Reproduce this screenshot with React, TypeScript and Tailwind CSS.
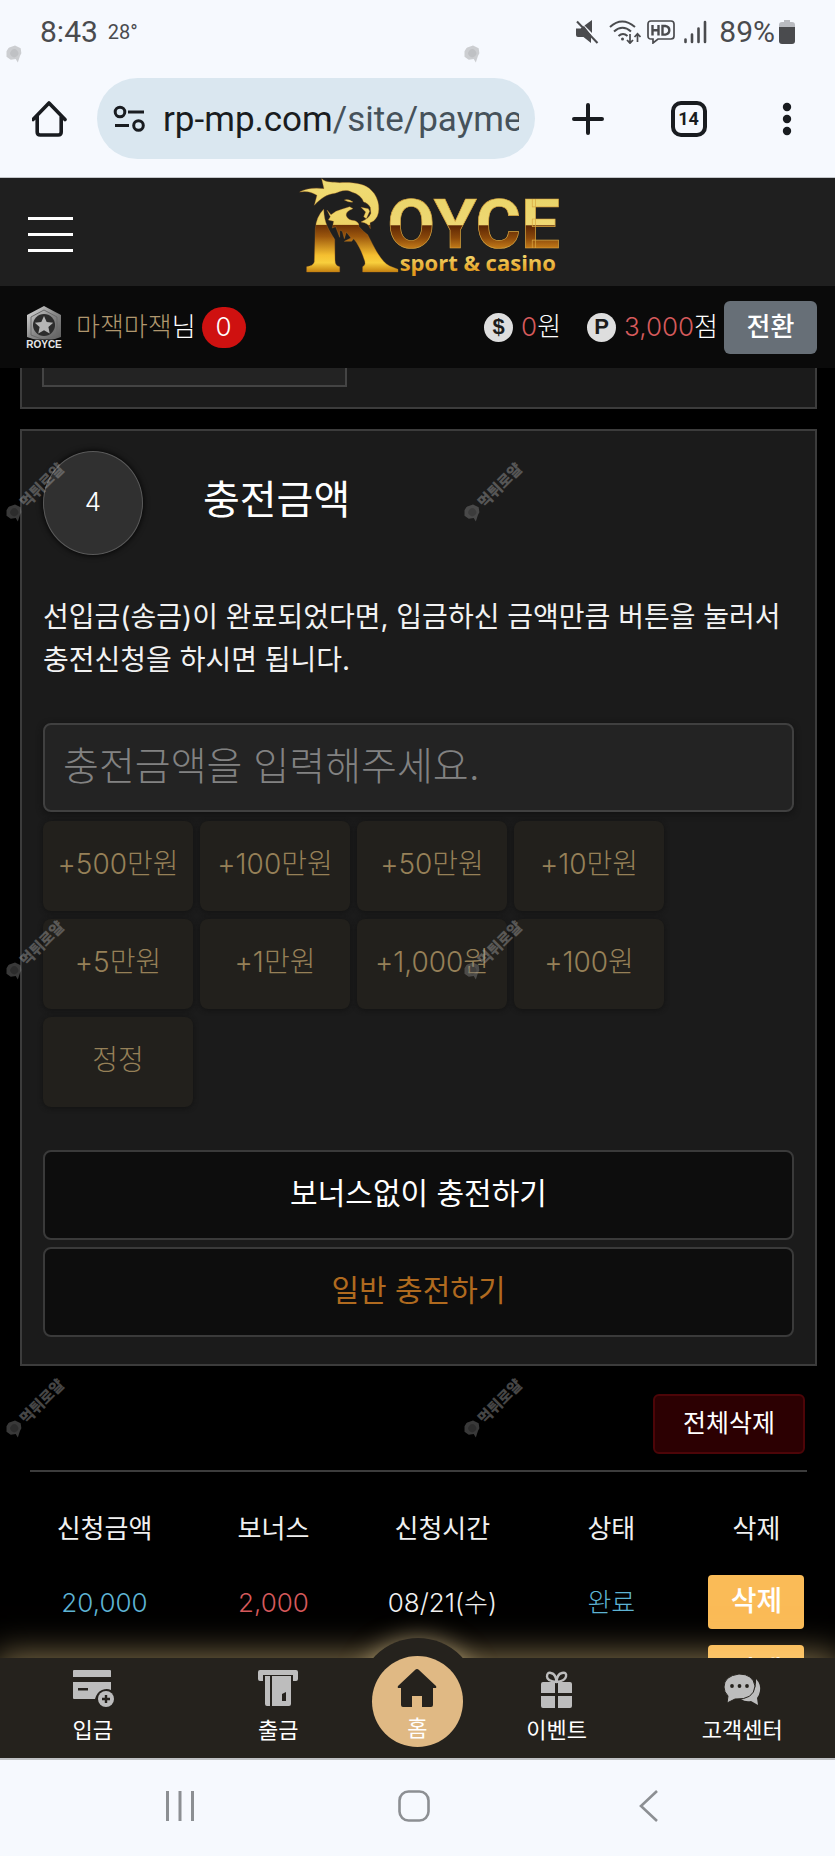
import { type ReactNode } from 'react'

const AMOUNTS = ['+500만원', '+100만원', '+50만원', '+10만원', '+5만원', '+1만원', '+1,000원', '+100원', '정정']

const WATERMARKS = [0, 1, 2, 3].flatMap((row) => [0, 1].map((col) => ({ row, col })))

function StatusBar() {
  return (
    <div className="flex h-16 items-center justify-between pr-10 pl-10 text-[#4a4b4e]">
      <div className="flex items-center gap-2.5">
        <span className="text-[30px] leading-8">8:43</span>
        <span className="text-xl leading-8">28°</span>
      </div>
      <div className="flex items-center">
        <svg className="mr-2.5 h-6 w-6" viewBox="0 0 24 24" fill="currentColor">
          <path d="M1 8.5h4.500L9 6l7 9v8L8.500 17H3q-2 0-2-2z" />
          <path d="M9.500 5.500 17 0v13z" />
          <path d="m2 1.500 20.500 21.500" stroke="currentColor" strokeWidth="2" />
        </svg>
        <svg className="mr-1.5 h-6 w-8" viewBox="0 0 32 24" fill="none" stroke="currentColor" strokeWidth="2">
          <path d="M1 7q12-11 25 0M5 11.500q8.500-7.500 17 0M9.500 16q4.500-4 9 0" />
          <circle cx="13.500" cy="19" r="1.500" fill="currentColor" stroke="none" />
          <path d="M21 14v9m-3-3 3 3.200 3-3.200M28.500 22v-8m-3 3 3-3.200 3 3.200" strokeWidth="1.700" />
        </svg>
        <svg className="mr-2 h-6 w-7" viewBox="0 0 28 24" fill="none" stroke="currentColor" strokeWidth="1.700">
          <path d="M4 1h20q3 0 3 3v12q0 3-3 3H11l-5 4v-4H4q-3 0-3-3V4q0-3 3-3z" />
          <path d="M5.500 5v10.500M11.500 5v10.500M5.500 10.200h6M15.500 6v8.600h2.800q4-.6 4-4.300t-4-4.300z" strokeWidth="2.400" />
        </svg>
        <svg className="mr-3 h-6 w-6" viewBox="0 0 24 24" stroke="currentColor" strokeWidth="2.600" strokeLinecap="round">
          <path d="M2.500 19.500V22M9 14.500V22M15.500 8.500V22M22 2v20" />
        </svg>
        <span className="text-[30px] leading-8">89%</span>
        <svg className="ml-1 h-6 w-4" viewBox="0 0 16 24">
          <path d="M5 0h6v2h2q3 0 3 3v3H0V5q0-3 3-3h2z" fill="#b9bbc0" />
          <path d="M0 7h16v14q0 3-3 3H3q-3 0-3-3z" fill="#4a4b4e" />
        </svg>
      </div>
    </div>
  )
}

function AddressBar() {
  return (
    <div className="flex h-[113px] items-center pb-1 pl-8 text-[#191c20]">
      <button aria-label="Home page">
        <svg className="h-9 w-9" viewBox="0 0 36 36" fill="none" stroke="currentColor" strokeWidth="3.600" strokeLinejoin="round" strokeLinecap="round">
          <path d="M1 18.500 17 2l16 16.500M5.200 14.500V31q0 3 3 3h18q3 0 3-3V14.500" />
        </svg>
      </button>
      <div className="ml-[29px] flex h-[81px] min-w-0 flex-1 items-center rounded-full bg-[#dae7f0] pr-4 pl-4">
        <svg className="h-7 w-8 shrink-0" viewBox="0 0 32 28" fill="none" stroke="currentColor" strokeWidth="3">
          <circle cx="7" cy="7" r="4.800" />
          <path d="M15 7h16M2 20.500h14" />
          <circle cx="25.500" cy="20.500" r="4.800" />
        </svg>
        <div className="ml-[18px] flex-1 overflow-hidden pt-0.5 text-[35px] leading-[48px] whitespace-nowrap">
          rp-mp.com<span className="text-[#46525a]">/site/payment</span>
        </div>
      </div>
      <div className="flex w-[300px] shrink-0 items-center justify-between pr-[30px] pl-[37px]">
        <button aria-label="New tab">
          <svg className="h-8 w-8" viewBox="0 0 32 32" stroke="currentColor" strokeWidth="4" strokeLinecap="round">
            <path d="M16 2v28M2 16h28" />
          </svg>
        </button>
        <button className="ml-1 flex h-9 w-9 items-center justify-center rounded-[10px] border-4 border-[#191c20] text-lg leading-5 font-bold">14</button>
        <button aria-label="Menu">
          <svg className="h-9 w-9" viewBox="0 0 36 36" fill="currentColor">
            <circle cx="18" cy="6" r="4.200" />
            <circle cx="18" cy="18" r="4.200" />
            <circle cx="18" cy="30" r="4.200" />
          </svg>
        </button>
      </div>
    </div>
  )
}

function Logo() {
  return (
    <svg className="h-[98px] w-[262px] overflow-visible" viewBox="28 24 786 294" role="img" aria-label="Royce sport & casino">
      <defs>
        <linearGradient id="gold-r" gradientUnits="userSpaceOnUse" x1="0" y1="26" x2="0" y2="306">
          <stop offset="0" stopColor="#f0dc75" />
          <stop offset="0.490" stopColor="#eed366" />
          <stop offset="0.500" stopColor="#6e3206" />
          <stop offset="0.620" stopColor="#9c570d" />
          <stop offset="0.820" stopColor="#f5bf30" />
          <stop offset="0.900" stopColor="#f8cf3d" />
          <stop offset="1" stopColor="#c5810f" />
        </linearGradient>
        <linearGradient id="gold-t" gradientUnits="userSpaceOnUse" x1="0" y1="66" x2="0" y2="238">
          <stop offset="0" stopColor="#e8d468" />
          <stop offset="0.570" stopColor="#efd873" />
          <stop offset="0.590" stopColor="#5e2704" />
          <stop offset="0.800" stopColor="#8a480a" />
          <stop offset="1" stopColor="#c9801a" />
        </linearGradient>
        <linearGradient id="gold-s" gradientUnits="userSpaceOnUse" x1="0" y1="248" x2="0" y2="306">
          <stop offset="0" stopColor="#f6e178" />
          <stop offset="1" stopColor="#e29a1c" />
        </linearGradient>
      </defs>
      <g fill="url(#gold-r)" stroke="#c07a20" strokeWidth="1">
        <path d="M30 66C46 56 74 52 103 56L96 26C112 40 130 34 150 38C188 36 228 40 246 62C270 84 274 128 258 146Q252 156 241 158L242 176Q236 158 214 156Q238 146 244 130L242 112Q234 98 222 96Q214 74 186 66C168 56 150 64 136 70C112 72 92 86 74 106L82 76Q58 60 30 66Z" />
        <path d="M102 118C104 160 116 178 135 208L136 270Q136 288 150 290V306H51V290Q70 288 74 276L77 176Q80 140 102 118Z" />
        <path d="M112 120L124 134Q138 122 156 118L180 110L190 116Q166 124 170 138Q176 152 196 152Q210 158 208 170Q222 186 234 194C252 228 272 274 300 288L325 298V306H219V290Q232 286 222 264C216 244 204 220 192 206L186 214L164 214L184 204L170 186L164 206L158 184L150 180L150 202L138 170L128 174L132 154L116 150L122 140Z" />
        <path d="M164 90Q176 86 190 96Q176 98 164 90ZM214 112L236 116L240 124L230 146L222 140L228 126Z" />
      </g>
      <text x="293" y="234" fontSize="208" fontWeight="700" fontFamily="Roboto, sans-serif" fill="url(#gold-t)" stroke="#d9a640" strokeWidth="2">
        OYCE
      </text>
      <text x="330" y="303" fontSize="66" fontWeight="700" fontFamily="'Open Sans', sans-serif" fill="url(#gold-s)">
        sport &amp; casino
      </text>
    </svg>
  )
}

function RankBadge() {
  return (
    <svg className="h-11 w-9" viewBox="0 0 36 44">
      <defs>
        <linearGradient id="steel" x1="0" y1="0" x2="1" y2="1">
          <stop offset="0" stopColor="#e0e0e0" />
          <stop offset="0.500" stopColor="#8a8a8a" />
          <stop offset="1" stopColor="#5c5c5c" />
        </linearGradient>
      </defs>
      <path d="M18 1 35 10v22l-9 3H10l-9-3V10z" fill="url(#steel)" />
      <path d="M18 5 31 12v18l-13 5-13-5V12z" fill="none" stroke="#6a6a6a" />
      <circle cx="18" cy="20" r="11" fill="#2c2c2c" />
      <path d="m18 11 2.700 6 6.500.7-4.800 4.400 1.300 6.400-5.700-3.200-5.700 3.200 1.300-6.400-4.800-4.400 6.500-.7z" fill="#b5b5b5" />
      <path d="M0 34.500h36V44H0z" fill="#0a0a0a" />
      <text x="18" y="42.500" textAnchor="middle" fontSize="10" fontWeight="700" fontFamily="'Liberation Sans', sans-serif" fill="#e6e6e6">
        ROYCE
      </text>
    </svg>
  )
}

function Coin({ children }: { children: ReactNode }) {
  return (
    <span className="flex h-[29px] w-[29px] items-center justify-center rounded-full bg-[#dedede] font-['Liberation_Sans',sans-serif] text-[22px] leading-7 font-bold text-[#1c1c1c]">
      {children}
    </span>
  )
}

function UserBar() {
  return (
    <div className="flex h-[82px] items-center bg-[#0a0a0a] pr-[18px] pl-[26px] text-[26px] leading-10 font-light text-white">
      <RankBadge />
      <span className="ml-3.5">
        <span className="text-[#b0976e]">마잭마잭</span>님
      </span>
      <span className="ml-1.5 flex h-[41px] w-11 items-center justify-center rounded-full bg-[#cf1110]">0</span>
      <div className="ml-auto flex items-center">
        <Coin>$</Coin>
        <span className="ml-2">
          <span className="text-[#d65a5c]">0</span>원
        </span>
        <span className="ml-[26px] flex">
          <Coin>P</Coin>
        </span>
        <span className="ml-2">
          <span className="text-[#d65a5c]">3,000</span>점
        </span>
        <button className="ml-1.5 h-[53px] w-[93px] rounded-md bg-[#676f77] font-medium">전환</button>
      </div>
    </div>
  )
}

function DepositCard() {
  return (
    <section className="mt-5 border-2 border-[#3c3c3c] bg-[#1b1b1b] px-[21px] pt-5 pb-[27px]">
      <div className="flex items-center">
        <span className="flex h-[104px] w-[100px] items-center justify-center rounded-[50%] border border-[#5a5a5a] bg-[#303030] pb-1 text-[26px] font-light text-white shadow-[0_0_6px_#000]">4</span>
        <h2 className="mb-1.5 ml-[60px] text-[40px] leading-[60px] text-white">충전금액</h2>
      </div>
      <p className="mt-[41px] text-[28px] leading-[43px] text-[#f2f2f2]">
        선입금(송금)이 완료되었다면, 입금하신 금액만큼 버튼을 눌러서 충전신청을 하시면 됩니다.
      </p>
      <input
        type="text"
        aria-label="충전금액"
        placeholder="충전금액을 입력해주세요."
        className="mt-[41px] block h-[89px] w-full rounded-lg border-2 border-[#404040] bg-[#232323] px-[18px] pb-1 text-[39px] font-light text-white shadow-[0_2px_6px_#111] placeholder:text-[#828282]"
      />
      <div className="mt-[9px] flex flex-wrap gap-x-[7px] gap-y-2 pr-[120px]">
        {AMOUNTS.map((label) => (
          <button key={label} className="h-[90px] w-[150px] rounded-lg bg-[#22201c] pb-1 text-[28px] font-light whitespace-nowrap text-[#968058] shadow-[0_1px_5px_#121212]">
            {label}
          </button>
        ))}
      </div>
      <div className="mt-[43px] flex flex-col gap-[7px]">
        <button className="h-[90px] rounded-lg border-2 border-[#3a3a3a] bg-[#0d0d0d] pb-1 text-[30px] text-white">보너스없이 충전하기</button>
        <button className="h-[90px] rounded-lg border-2 border-[#3a3a3a] bg-[#0d0d0d] pb-1 text-[30px] text-[#b06a1f]">일반 충전하기</button>
      </div>
    </section>
  )
}

function DeleteButton() {
  return <button className="h-[54px] w-24 rounded-sm bg-[#fabb57] pb-0.5 align-middle text-[28px] font-medium text-white">삭제</button>
}

function History() {
  return (
    <section>
      <div className="mx-2.5 flex justify-end border-b-2 border-[#3c3c3c] pt-7 pr-0.5 pb-4">
        <button className="h-[60px] w-[152px] rounded-md border-2 border-[#4d0508] bg-[#2c0002] text-[25px] text-white">전체삭제</button>
      </div>
      <table className="w-full table-fixed text-center text-[26px] text-[#f0f0f0]">
        <thead>
          <tr className="h-[95px]">
            <th className="w-[21.2%] pt-[18px] font-normal">신청금액</th>
            <th className="w-[21.2%] pt-[18px] font-normal">보너스</th>
            <th className="w-[21.2%] pt-[18px] font-normal">신청시간</th>
            <th className="w-[21.2%] pt-[18px] font-normal">상태</th>
            <th className="pt-[18px] font-normal">삭제</th>
          </tr>
        </thead>
        <tbody className="font-light">
          <tr className="h-[70px]">
            <td className="text-[#5eb4d4]">20,000</td>
            <td className="text-[#d65a5c]">2,000</td>
            <td>08/21(수)</td>
            <td className="text-[#5eb4d4]">완료</td>
            <td>
              <DeleteButton />
            </td>
          </tr>
          <tr className="h-[70px]">
            <td />
            <td />
            <td />
            <td />
            <td>
              <DeleteButton />
            </td>
          </tr>
        </tbody>
      </table>
    </section>
  )
}

function NavItem({ label, children }: { label: string; children: ReactNode }) {
  return (
    <a href="#" className="relative flex flex-col items-center pt-2.5 text-[22px] leading-8 text-white">
      {children}
      <span className="mt-1.5">{label}</span>
    </a>
  )
}

function BottomNav() {
  return (
    <nav className="relative z-10 grid h-[100px] grid-cols-[2fr_2fr_1fr_2fr_2fr] bg-[#25221d] shadow-[0_0_32px_4px_rgba(255,222,150,0.5)]">
      {/* raised disc behind the home button */}
      <div className="absolute -top-5 left-1/2 h-[120px] w-[120px] -translate-x-1/2 rounded-full bg-[#25221d] shadow-[0_0_24px_rgba(255,230,170,0.5)]" />
      <div className="absolute inset-0 bg-[#25221d]" />
      <NavItem label="입금">
        <svg className="h-10 w-[42px]" viewBox="0 0 42 40" fill="#bdbdbd">
          <path d="M2 2h36q1 0 1 1v6H1V3q0-1 1-1zM1 14h38v8q-4-2-9 0t-7 9H2q-1 0-1-1zM6 20v2.500h10V20z" fillRule="evenodd" />
          <circle cx="34" cy="31" r="8" />
          <path d="M34 27v8M30 31h8" stroke="#25221d" strokeWidth="2.400" />
        </svg>
      </NavItem>
      <NavItem label="출금">
        <svg className="h-10 w-[42px]" viewBox="0 0 42 40" fill="#bdbdbd">
          <path d="M3 2h36q2 0 2 2v7q0 2-2 2h-3V7H6v6H3q-2 0-2-2V4q0-2 2-2z" />
          <path d="M8 8h5v30h-3q-2 0-2-2zM15 8h19v28q0 2-2 2H15zM25 26v7h4v-9z" fillRule="evenodd" />
        </svg>
      </NavItem>
      <a href="#" className="relative mx-auto -mt-0.5 flex h-[91px] w-[91px] flex-col items-center rounded-full bg-[#e0b984] pt-3 text-[22px] leading-8 text-white">
        <svg className="h-10 w-12 shrink-0" viewBox="0 0 48 40" fill="#25221d">
          <path d="M22 2q2-2 4 0l17 16q1 2-1 2h-2v17q0 2-2 2h-9V28H19v11h-9q-2 0-2-2V20H6q-2 0-1-2z" />
        </svg>
        <span className="mt-1">홈</span>
      </a>
      <NavItem label="이벤트">
        <svg className="h-10 w-9" viewBox="0 0 36 40" fill="#bdbdbd">
          <path d="M4 14h12v11H2v-9q0-2 2-2zM19 14h12q2 0 2 2v9H19zM2 28h14v12H4q-2 0-2-2zM19 28h14v10q0 2-2 2H19z" />
          <path d="M17.500 14Q8 13 8 8.500T12 5q5 1 5.500 9Q18 6 23 5t4 3.500-9.500 5.500z" fill="none" stroke="#bdbdbd" strokeWidth="2.400" />
        </svg>
      </NavItem>
      <NavItem label="고객센터">
        <svg className="h-10 w-10" viewBox="0 0 40 40" fill="#bdbdbd">
          <path d="M34 11q5 5 4 12-1 5-3 7l1 7-7-4q-6 1-10-2 16-3 15-20z" />
          <path d="M17 6Q2 8 2 19q0 5 4 9l-1 7 8-4q19 1 20-13Q31 6 17 6z" stroke="#25221d" />
          <g fill="#25221d">
            <circle cx="10" cy="18" r="1.900" />
            <circle cx="17.500" cy="18" r="1.900" />
            <circle cx="25" cy="18" r="1.900" />
          </g>
        </svg>
      </NavItem>
    </nav>
  )
}

function SystemNav() {
  return (
    <div className="relative z-10 flex h-[98px] items-center justify-between border-t-2 border-[#bfc1c4] bg-[#f6f9fe] pr-[171px] pb-1 pl-[164px] text-[#8c8f93]">
      <button aria-label="Recent apps">
        <svg className="h-8 w-8" viewBox="0 0 32 32" stroke="currentColor" strokeWidth="3">
          <path d="M3.500 1v30M16 1v30M28.500 1v30" />
        </svg>
      </button>
      <button aria-label="Home">
        <svg className="h-8 w-8" viewBox="0 0 32 32" fill="none" stroke="currentColor" strokeWidth="2.600">
          <rect x="1.500" y="1.500" width="29" height="29" rx="9" />
        </svg>
      </button>
      <button aria-label="Back">
        <svg className="h-8 w-8" viewBox="0 0 32 32" fill="none" stroke="currentColor" strokeWidth="2.600">
          <path d="M25 1 9 16l16 15" />
        </svg>
      </button>
    </div>
  )
}

function Watermarks() {
  return (
    <div className="pointer-events-none absolute inset-0 z-20 overflow-hidden">
      {WATERMARKS.map(({ row, col }) => (
        <div
          key={`${row}-${col}`}
          className="absolute flex w-20 origin-[9px_50%] -rotate-45 items-center gap-0.5 opacity-40"
          style={{ left: 6 + col * 458, top: 45 + row * 458 }}
        >
          <svg className="h-[18px] w-[18px] shrink-0" viewBox="0 0 18 18" fill="#8f8f8f">
            <path d="m9 0 6 3 2 6-3 4-3 1-6 3 1-4-4-3-1-5 4-4z" />
            <circle cx="9" cy="8" r="4" fill="#6f6f6f" />
          </svg>
          {row > 0 && <span className="text-[15px] leading-5 font-black whitespace-nowrap text-[#b0b0b0]">먹튀로얄</span>}
        </div>
      ))}
    </div>
  )
}

export default function App() {
  return (
    <div className="relative flex h-screen flex-col overflow-hidden bg-black font-[Inter,'Noto_Sans_CJK_KR',sans-serif]">
      <div className="shrink-0 border-b border-[#c4c7cb] bg-[#f6f9fe] font-[Roboto,sans-serif]">
        <StatusBar />
        <AddressBar />
      </div>
      <header className="shrink-0">
        <div className="grid h-[108px] grid-cols-[1fr_auto_1fr] items-start bg-[#1f1f1f] px-7">
          <button aria-label="메뉴" className="flex h-[108px] w-[45px] flex-col justify-center gap-[13px] pt-1">
            <span className="h-[3px] w-full bg-white" />
            <span className="h-[3px] w-full bg-white" />
            <span className="h-[3px] w-full bg-white" />
          </button>
          <div className="ml-6">
            <Logo />
          </div>
        </div>
        <UserBar />
      </header>
      <main className="min-h-0 flex-1 overflow-y-auto pr-[18px] pl-5 [scrollbar-width:none]">
        {/* tail of the previous step */}
        <section className="h-[41px] border-2 border-t-0 border-[#3c3c3c] bg-[#1b1b1b] pl-5">
          <div className="h-[19px] w-[305px] border-2 border-t-0 border-[#444444] bg-[#232323]" />
        </section>
        <DepositCard />
        <History />
      </main>
      <BottomNav />
      <SystemNav />
      <Watermarks />
    </div>
  )
}
